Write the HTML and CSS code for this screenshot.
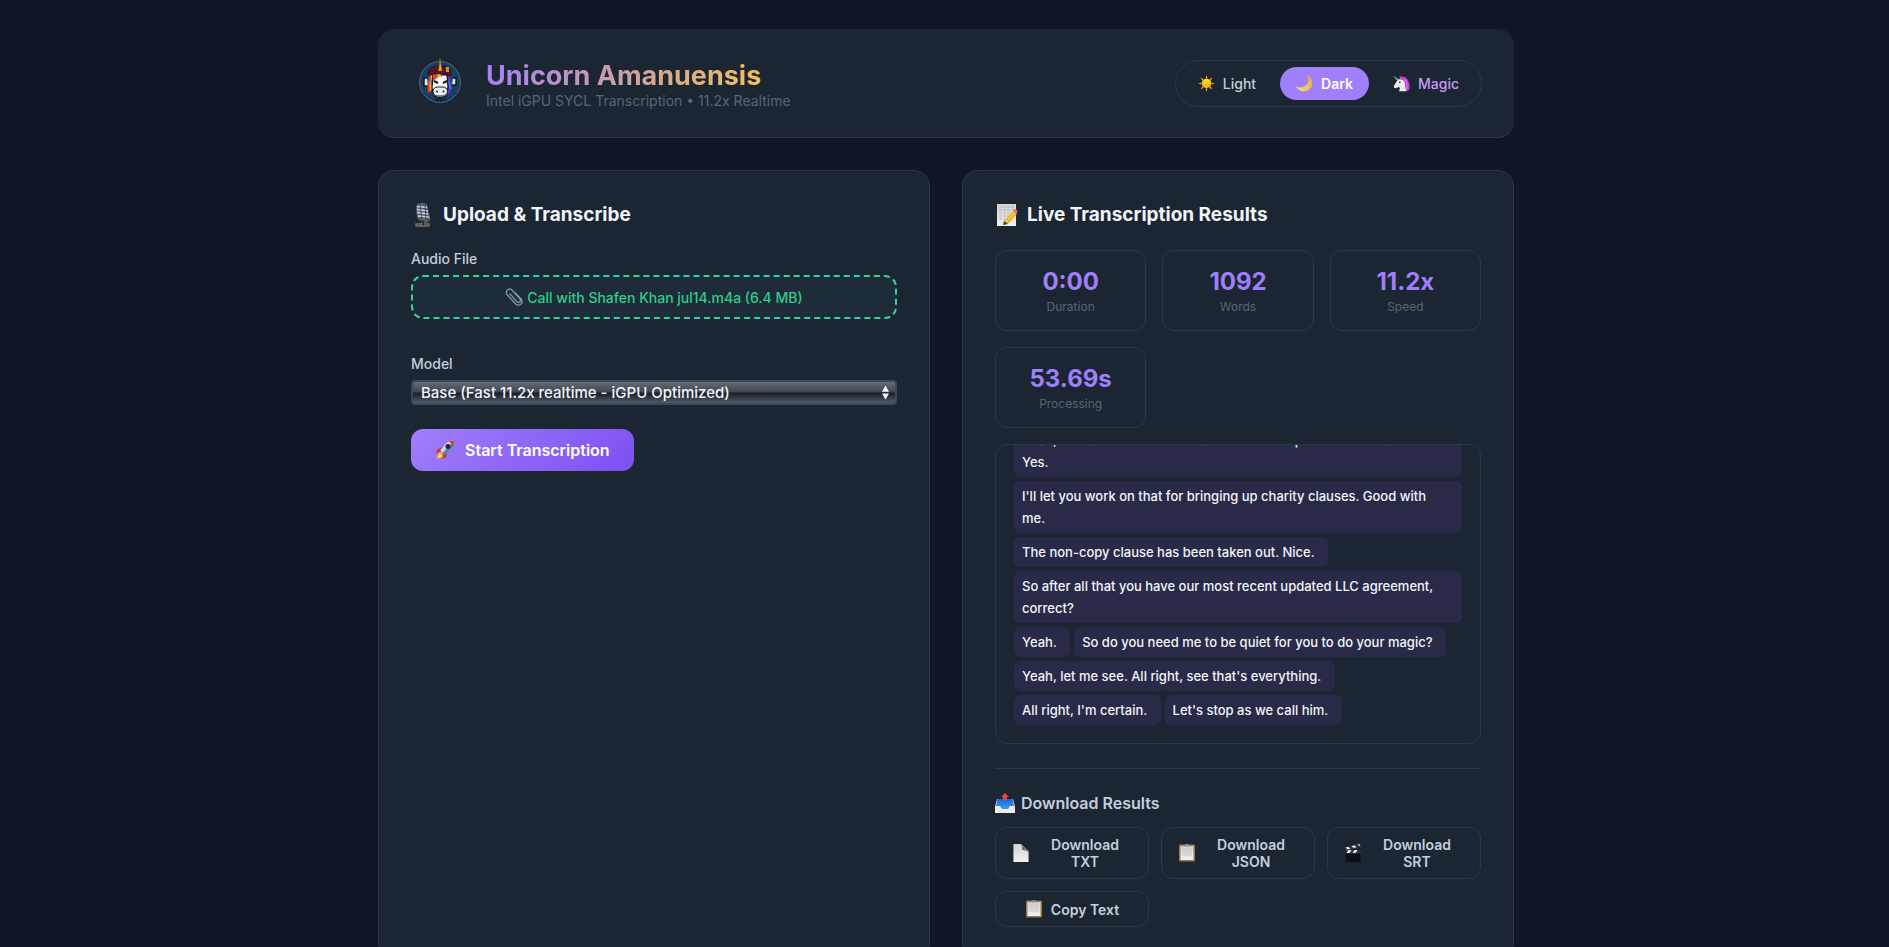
FILE: index.html
```html
<!DOCTYPE html>
<html lang="en">
<head>
<meta charset="utf-8">
<title>Unicorn Amanuensis</title>
<meta name="viewport" content="width=device-width, initial-scale=1">
<link rel="stylesheet" href="styles.css">
</head>
<body>
<svg class="sprite" aria-hidden="true">
  <defs>
    <linearGradient id="sun-fill" x1="0" y1="0" x2="0" y2="1"><stop offset="0" stop-color="#ffe03a"/><stop offset="1" stop-color="#f5a800"/></linearGradient>
    <linearGradient id="moon-fill" x1="1" y1="0" x2="0" y2="1"><stop offset="0" stop-color="#d9a936"/><stop offset="1" stop-color="#ffdf70"/></linearGradient>
    <linearGradient id="tray-fill" x1="0" y1="0" x2="0" y2="1"><stop offset="0" stop-color="#1767d2"/><stop offset="1" stop-color="#3f9bf5"/></linearGradient>
    <linearGradient id="paper-fill" x1="0" y1="0" x2="0" y2="1"><stop offset="0" stop-color="#d4d4d2"/><stop offset="1" stop-color="#f1f1ef"/></linearGradient>
    <symbol id="clipboard" viewBox="1 2 18 18">
      <rect x="2" y="2.500" width="16" height="17" rx="1" fill="#9b7647"/>
      <rect x="3.500" y="4" width="13" height="14" fill="url(#paper-fill)"/>
      <path d="M5 7h10M5 9h10M5 11h10M5 13h10" stroke="#c2c2c2" stroke-width=".8"/>
      <path d="M6 4.500V3h2.500a1.500 1.500 0 0 1 3 0H14v1.500z" fill="#8d9299"/>
    </symbol>
  </defs>
</svg>
<div class="page">
  <header class="header">
    <div class="brand">
      <svg class="logo" viewBox="0 0 60 60" role="img" aria-label="Unicorn logo">
        <circle cx="30" cy="29" r="20.500" fill="#173f66" stroke="#59616b"/>
        <path d="M17 25h-3v8h4M43 25h3v7h-4" fill="#e2e6ea" stroke="#131722" stroke-width="1.500"/>
        <path d="M21 20c-3 5-4 10-3 21l4-5 3-13z" fill="#e8352e"/>
        <path d="M22 21c-3 6-3 11-2 18l4-7z" fill="#f5a51e"/>
        <path d="M24 21c-3 5-3 9-2 13l4-8z" fill="#35ad4f"/>
        <path d="M38 21c4 6 5 13 1 21l-3-8z" fill="#5b35c4"/>
        <path d="M20 25l2 7M38 28l3 8" stroke="#2e8ee6" stroke-width="1.500"/>
        <path d="M23 22h14l1 12-2 9q-6 3-12 0l-2-8z" fill="#f5f5f5" stroke="#11151d" stroke-width="1.200"/>
        <path d="M23 20l8 1-4 4-4 3z" fill="#e8412c"/><path d="M26 20h7l-4 5z" fill="#f4c927"/><path d="M30 20h6l-5 4z" fill="#2e91db"/>
        <path d="M18 22q0-9 11-9 12-1 12 7l-1 3q-10-4-22-1z" fill="#5c1322" stroke="#21101a"/>
        <path d="M36 14h3v5h-3z" fill="#c99835"/>
        <path d="M28.500 18L30 5l2 13z" fill="#f0b62c" stroke="#755313" stroke-width=".6"/>
        <path d="M24 28l4 2M37 28l-4 2" stroke="#171a20" stroke-width="2"/>
        <rect x="23" y="34" width="14.500" height="9" rx="4.500" fill="#e9ebee" stroke="#171a20"/>
        <circle cx="27" cy="38.500" r="1" fill="#222"/><circle cx="33.500" cy="38.500" r="1" fill="#222"/>
        <path d="M23 47h3l1-2 1 4 2-5 1 5 2-4 1 2h3" fill="none" stroke="#0d1420"/>
      </svg>
      <div class="brand-text">
        <h1 class="title">Unicorn Amanuensis</h1>
        <p class="subtitle">Intel iGPU SYCL Transcription • 11.2x Realtime</p>
      </div>
    </div>
    <nav class="themes" aria-label="Theme">
      <button class="theme" type="button">
        <svg class="icon icon-theme" viewBox="0 0 20 20" aria-hidden="true"><path d="M10 0l1.200 4H8.800zM10 20l1.200-4H8.800zM0 10l4-1.200v2.400zM20 10l-4-1.200v2.400zM3 3l3.700 2L5 6.700zM17 3l-3.700 2L15 6.700zM3 17l3.700-2L5 13.300zM17 17l-3.700-2 1.700-1.700z" fill="#f0a51c"/><circle cx="10" cy="10" r="5.600" fill="url(#sun-fill)"/></svg>
        Light
      </button>
      <button class="theme theme-active" type="button">
        <svg class="icon icon-theme" viewBox="0 0 20 20" aria-hidden="true"><path d="M13 0a10 10 0 1 1-13 13.500Q8 17 13 11q3.500-5 0-11z" fill="url(#moon-fill)"/></svg>
        Dark
      </button>
      <button class="theme theme-magic" type="button">
        <svg class="icon icon-theme" viewBox="0 0 20 20" aria-hidden="true"><path d="M8 3q6-3 9 2 4 5 2 13l-6 1-2-8z" fill="#b93bd0"/><path d="M13 5q5 3 3 13" fill="none" stroke="#e68ced" stroke-width="1.200"/><path d="M6 5q7-1 8 5 0 5 2 9H7q2-4 0-5l-4 1.500q-3-.5-1.500-3.500z" fill="#ece9f1"/><path d="M0 1l7 4-2 2z" fill="#58b99a"/><path d="M8 5V0l3 5z" fill="#e05b80"/><circle cx="8" cy="8.500" r="1" fill="#302535"/></svg>
        Magic
      </button>
    </nav>
  </header>

  <main class="columns">
    <section class="card">
      <h2 class="card-title">
        <svg class="icon icon-large" viewBox="0 0 24 24" aria-hidden="true"><path d="M5 5q0-5 6-5t6 5l1 9q0 4-6 4-5 0-6-4z" fill="#59636d"/><path d="M6 3.500l10 1M6 6.500l11 1.500M6 9.500l11.500 1.500M7 13l11 1" stroke="#c9d8e6" stroke-width="1.400"/><path d="M9 1.500L11 17M14 1.500l1 15" stroke="#252a30" stroke-width=".7"/><path d="M18 12q2 7-4 7v2h4v2H5v-2h6v-2" fill="none" stroke="#77716c" stroke-width="1.300"/></svg>
        Upload &amp; Transcribe
      </h2>
      <div class="field field-audio">
        <label class="label" for="audio">Audio File</label>
        <button class="file" id="audio" type="button">
          <svg class="icon icon-small" viewBox="0 0 20 20" aria-hidden="true"><path d="M5 6l8 9q2 2 3.500.5t0-3.500L8 2.500Q5.500 0 3 2T2 7l10 11q3 2 5.500 0t1-5L11 5" fill="none" stroke="#8995a0" stroke-width="1.500"/></svg>
          Call with Shafen Khan jul14.m4a (6.4 MB)
        </button>
      </div>
      <div class="field">
        <label class="label" for="model">Model</label>
        <div class="select-wrap">
          <select class="select" id="model"><option>Base (Fast 11.2x realtime - iGPU Optimized)</option></select>
          <svg class="arrows" viewBox="0 0 8 16" aria-hidden="true"><path d="M4 0l4 7H0zM4 16l4-7H0z" fill="#f4f6f9"/></svg>
        </div>
      </div>
      <button class="start" type="button">
        <svg class="icon" viewBox="0 0 20 20" aria-hidden="true"><path d="M8 7L3 9 1 13l5-1zM13 12l-2 5-4 2 1-5z" fill="#d82b2b"/><path d="M4 12l-3 7 7-2-1-4z" fill="#ffb52b"/><path d="M5 14l-2 4 4-2z" fill="#fff27a"/><path d="M19.500.5q0 6-4 9.500l-6 5L5 10.500l5-6Q14 .5 19.500.5z" fill="#c9d8e2"/><path d="M19.500.5q0 6-4 9.500l-6 5-2-2z" fill="#4b87a8"/><path d="M14 1.500L19.500.5 18.500 6z" fill="#d83e38"/><circle cx="13" cy="6.500" r="2.500" fill="#242a3b"/></svg>
        Start Transcription
      </button>
    </section>

    <section class="card">
      <h2 class="card-title">
        <svg class="icon icon-large" viewBox="0 0 24 24" aria-hidden="true"><rect x="2" y="1" width="19" height="22" fill="url(#paper-fill)"/><path d="M4 4h15M4 7h15M4 10h12M4 13h10M4 16h7" stroke="#aeb2b5" stroke-width="1" stroke-dasharray="3 1"/><path d="M9 18L18 8l4 3-9 10-5 1z" fill="#f3b52c"/><path d="M11 19l9-10" stroke="#ffdd66"/><path d="M18 8l2-2q2 0 2.500 3L21 11z" fill="#e6707c"/><path d="M9 18l4 3-5 1z" fill="#4e4336"/></svg>
        Live Transcription Results
      </h2>
      <div class="stats">
        <div class="stat"><div class="stat-value">0:00</div><div class="stat-label">Duration</div></div>
        <div class="stat"><div class="stat-value">1092</div><div class="stat-label">Words</div></div>
        <div class="stat"><div class="stat-value">11.2x</div><div class="stat-label">Speed</div></div>
        <div class="stat"><div class="stat-value">53.69s</div><div class="stat-label">Processing</div></div>
      </div>
      <div class="transcript">
        <div class="lines">
          <span class="segment segment-full">Yeah, we have to send them all the items required at the start.
Yes. </span>
          <span class="segment segment-full">I'll let you work on that for bringing up charity clauses. Good with
me. </span>
          <span class="segment">The non-copy clause has been taken out. Nice. </span>
          <span class="segment">So after all that you have our most recent updated LLC agreement, correct? </span>
          <span class="segment">Yeah. </span>
          <span class="segment">So do you need me to be quiet for you to do your magic? </span>
          <span class="segment">Yeah, let me see. All right, see that's everything. </span>
          <span class="segment">All right, I'm certain. </span>
          <span class="segment">Let's stop as we call him. </span>
        </div>
      </div>
      <div class="downloads">
        <h3 class="downloads-title">
          <svg class="icon" viewBox="0 0 20 20" aria-hidden="true"><path d="M2 6h16l2 8v6H0v-6z" fill="#ecebe7"/><path d="M2.500 6h15l1.500 7h-4l-2 3H7l-2-3H1z" fill="url(#tray-fill)"/><path d="M10 0l4 4h-2v3H8V4H6z" fill="#f0413d"/></svg>
          Download Results
        </h3>
        <div class="download-grid">
          <button class="download" type="button">
            <svg class="icon icon-small" viewBox="1 1 18 19" aria-hidden="true"><path d="M2 1h8l8 8v11H2z" fill="url(#paper-fill)"/><path d="M10 1q2 3 1 6 4 0 7 3L10 1z" fill="#666b70"/></svg>
            <span>Download TXT</span>
          </button>
          <button class="download" type="button">
            <svg class="icon icon-small" viewBox="0 0 18 18" aria-hidden="true"><use href="#clipboard"/></svg>
            <span>Download JSON</span>
          </button>
          <button class="download" type="button">
            <svg class="icon icon-small" viewBox="2 1 17 18" aria-hidden="true"><rect x="3" y="10" width="15" height="9" rx="1" fill="#0c0f13"/><path d="M3 7h15v3.500H3zM2 4.500L17 1l1 3L3 7.500z" fill="#303438"/><path d="M4 10l2-3h3l-2 3zM10 10l2-3h3l-2 3zM3 4.500L6 3.800l2 2-3 .7zM9 3L12 2.300l2 2-3 .7zM15 1.500l2-.5 1 2.500z" fill="#e8e8e8"/></svg>
            <span>Download SRT</span>
          </button>
          <button class="download" type="button">
            <svg class="icon icon-small" viewBox="0 0 18 18" aria-hidden="true"><use href="#clipboard"/></svg>
            <span>Copy Text</span>
          </button>
        </div>
      </div>
    </section>
  </main>
</div>
</body>
</html>
```
FILE: styles.css
```css
* { box-sizing: border-box; }

body {
  margin: 0;
  padding-left: 3px;
  background: #111624;
  color: #f1f5f9;
  font-family: Inter, "Liberation Sans", sans-serif;
  font-size: 16px;
  line-height: 24px;
}

h1, h2, h3, p { margin: 0; }
button, select { font: inherit; color: inherit; }
button { cursor: pointer; }

.sprite { position: absolute; width: 0; height: 0; }
.icon { flex: none; width: 20px; height: 20px; }
.icon-theme { width: 17px; height: 17px; }
.icon-small { width: 18px; height: 18px; }
.icon-large { width: 24px; height: 24px; }

.page {
  max-width: 1200px;
  margin: 0 auto;
  padding: 29px 32px 32px;
}

.header {
  display: flex;
  align-items: center;
  justify-content: space-between;
  margin-bottom: 32px;
  padding: 24px 32px;
  background: #1c2532;
  border-bottom: 1px solid #2c3746;
  border-radius: 16px;
}

.brand { display: flex; align-items: center; gap: 16px; }
.brand-text { padding-top: 3px; }
.logo { width: 60px; height: 60px; }
.title {
  width: max-content;
  font-size: 27px;
  line-height: 32px;
  font-weight: 700;
  background: linear-gradient(135deg, #a07ffa, #f5c451);
  background-clip: text;
  -webkit-background-clip: text;
  color: transparent;
}
.subtitle { font-size: 14px; line-height: 17px; color: #56657b; }

.themes {
  display: flex;
  gap: 8px;
  padding: 6px;
  border: 1px solid #2a3745;
  border-radius: 24px;
}
.theme {
  display: flex;
  align-items: center;
  gap: 8px;
  padding: 8px 16px;
  border: 0;
  border-radius: 18px;
  background: none;
  color: #c3cfdd;
  font-size: 14px;
  line-height: 17px;
  font-weight: 500;
}
.theme-active { background: #a07ffa; color: #fff; font-weight: 600; }
.theme-magic { color: #c99bf7; }

.columns { display: grid; grid-template-columns: repeat(2, minmax(0, 1fr)); gap: 32px; }

.card {
  padding: 32px;
  background: #1c2532;
  border: 1px solid #2a3544;
  border-radius: 16px;
}
.card-title {
  display: flex;
  align-items: center;
  gap: 8px;
  margin-bottom: 23px;
  font-size: 19px;
  line-height: 24px;
  font-weight: 700;
}

.field { display: flex; flex-direction: column; margin-bottom: 24px; }
.field-audio { margin-bottom: 36px; }
.label {
  margin-bottom: 8px;
  color: #c3cfdd;
  font-size: 14px;
  line-height: 17px;
  font-weight: 500;
}
.file {
  display: flex;
  align-items: center;
  justify-content: center;
  gap: 4px;
  padding: 11px;
  border: 2px dashed #34d399;
  border-radius: 12px;
  background: #1d2c38;
  color: #30cd8c;
  font-size: 14px;
  line-height: 17px;
  font-weight: 500;
}

.select-wrap { position: relative; }
.select {
  display: block;
  width: 100%;
  padding: 0 24px 0 8px;
  border: 2px solid #3b4859;
  border-radius: 4px;
  appearance: none;
  background: linear-gradient(#676b74, #40454f 48%, #161c29 52%, #555a64);
  font-size: 15px;
  line-height: 21px;
  font-weight: 500;
}
.arrows { position: absolute; right: 8px; top: 5px; width: 7px; height: 15px; pointer-events: none; }

.start {
  display: flex;
  align-items: center;
  gap: 10px;
  padding: 11px 24px;
  border: 0;
  border-radius: 12px;
  background: linear-gradient(135deg, #a07ffa, #7c4ff2);
  color: #fff;
  line-height: 20px;
  font-weight: 600;
}

.stats { display: grid; grid-template-columns: repeat(3, minmax(0, 1fr)); gap: 16px; margin-bottom: 16px; }
.stat {
  padding: 16px;
  border: 1px solid #2a3745;
  border-radius: 12px;
  text-align: center;
}
.stat-value { font-size: 24px; line-height: 30px; font-weight: 700; color: #a07ffa; }
.stat-label { margin-top: 2px; font-size: 12px; line-height: 15px; color: #56657b; }

.transcript {
  display: flex;
  flex-direction: column;
  justify-content: flex-end;
  height: 300px;
  margin-bottom: 24px;
  padding: 0 18px 18px;
  overflow: hidden;
  border: 1px solid #2a3745;
  border-radius: 12px;
}
.lines { display: flex; flex-wrap: wrap; gap: 4px; }
.segment {
  padding: 4px 10px 4px 8px;
  border-radius: 6px;
  background: #282a48;
  font-size: 13px;
  line-height: 22px;
  font-weight: 500;
  white-space: pre-wrap;
}
.segment-full { flex: 1 0 100%; }

.downloads { padding-top: 24px; border-top: 1px solid #2a3745; }
.downloads-title {
  display: flex;
  align-items: center;
  gap: 6px;
  margin-bottom: 14px;
  color: #c3cfdd;
  font-size: 16px;
  line-height: 20px;
  font-weight: 600;
}
.download-grid { display: grid; grid-template-columns: repeat(3, minmax(0, 1fr)); gap: 12px; }
.download {
  display: flex;
  align-items: center;
  justify-content: center;
  gap: 8px;
  padding: 8px 16px;
  border: 1px solid #2a3745;
  border-radius: 12px;
  background: none;
  color: #c3cfdd;
  font-size: 14px;
  line-height: 17px;
  font-weight: 600;
}
```
